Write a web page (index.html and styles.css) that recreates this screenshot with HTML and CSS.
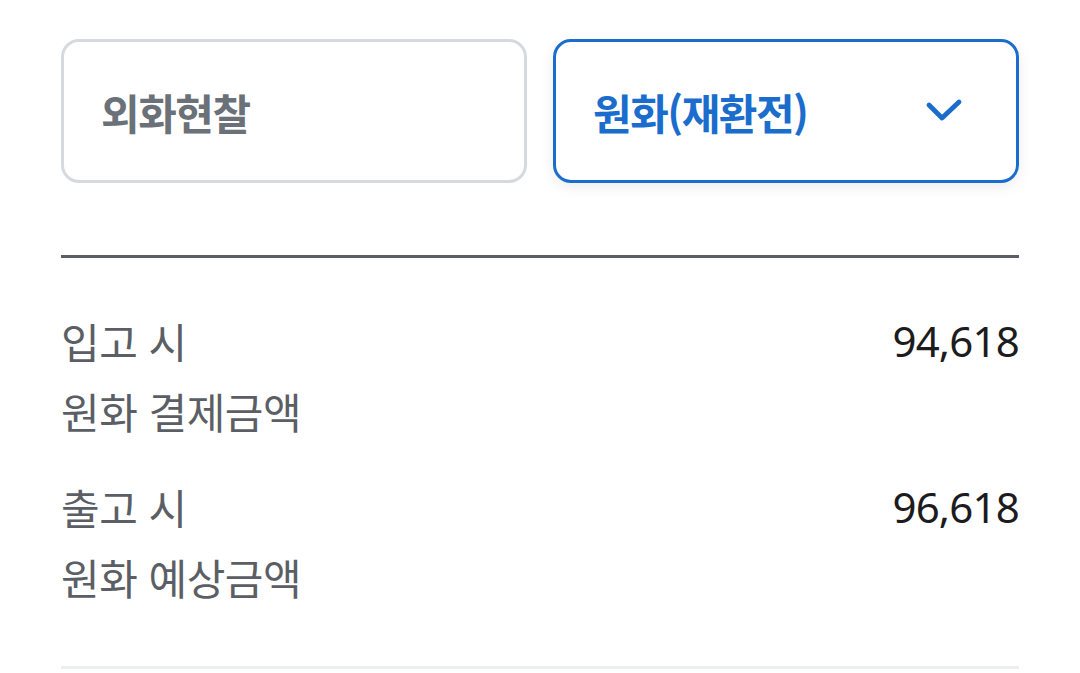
FILE: index.html
```html
<!DOCTYPE html>
<html lang="ko">
<head>
  <meta charset="utf-8">
  <title>환전 수령 방법</title>
  <link rel="stylesheet" href="styles.css">
</head>
<body>
  <div class="container">
    <div class="options">
      <div class="option">
        <span>외화현찰</span>
      </div>
      <div class="option selected">
        <span>원화(재환전)</span>
        <svg class="check" width="40" height="30" viewBox="0 0 40 30">
          <path d="M5 9 L18 22 L35 6" fill="none" stroke="#1a6dcc" stroke-width="4.8" stroke-linecap="round" stroke-linejoin="round"/>
        </svg>
      </div>
    </div>
    <div class="summary">
      <div class="row">
        <div class="label">입고 시<br>원화 결제금액</div>
        <div class="amount">94,618</div>
      </div>
      <div class="row">
        <div class="label">출고 시<br>원화 예상금액</div>
        <div class="amount">96,618</div>
      </div>
    </div>
  </div>
</body>
</html>
```

FILE: styles.css
```css
body {
  margin: 0;
  background: #fff;
  font-family: "Noto Sans CJK KR", "Noto Sans", sans-serif;
}
.container {
  padding: 39px 61px 0 61px;
}
.options {
  display: flex;
  gap: 26px;
}
.option {
  flex: 1;
  box-sizing: border-box;
  height: 144px;
  display: flex;
  align-items: center;
  justify-content: space-between;
  padding: 0 52px 0 37px;
  border: 3px solid #d6dade;
  border-radius: 18px;
  font-size: 42px;
  font-weight: 700;
  letter-spacing: -1.5px;
  color: #6b7178;
}
.option.selected {
  border-color: #1a6dcc;
  color: #1a6dcc;
  box-shadow: 0 4px 14px rgba(0, 0, 0, 0.08);
}
.check {
  display: block;
}
.summary {
  margin-top: 72px;
  border-top: 3px solid #5b5f65;
  border-bottom: 3px solid #eceef0;
  padding: 48px 0 54px;
  display: flex;
  flex-direction: column;
  gap: 26px;
}
.row {
  display: flex;
  justify-content: space-between;
  align-items: flex-start;
}
.label {
  font-size: 42px;
  line-height: 70px;
  color: #5b5f65;
  letter-spacing: -0.5px;
}
.amount {
  font-family: "Noto Sans", sans-serif;
  font-size: 42px;
  line-height: 70px;
  color: #1c1c1e;
  letter-spacing: -0.8px;
}
```
